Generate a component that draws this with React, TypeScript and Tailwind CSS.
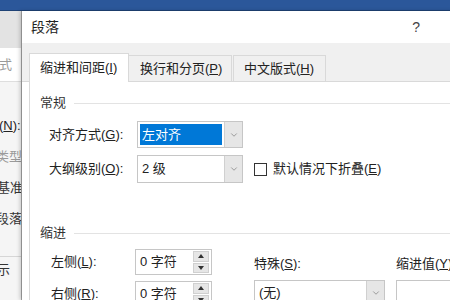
import { ChevronDown } from "lucide-react";

// 段落对话框 - 缩进和间距
const font = { fontFamily: '"Liberation Sans", "Noto Sans CJK SC", sans-serif' };

function Select({ value, selected, className }: { value: string; selected?: boolean; className: string }) {
  return (
    <div className={`flex border border-[#c6c6c6] bg-white ${className}`}>
      <div className="flex-1 flex items-center p-[2px] min-w-0">
        {selected ? (
          <span className="flex-1 h-full flex items-center bg-[#0078d7] text-white pl-[2px] text-[13px]">{value}</span>
        ) : (
          <span className="pl-[2px] text-[13px] text-[#222]">{value}</span>
        )}
      </div>
      <div className="w-[18px] flex items-center justify-center bg-[#e6e6e6] border-l border-[#d0d0d0]">
        <ChevronDown size={10} strokeWidth={1.5} className="text-[#6d6d6d]" />
      </div>
    </div>
  );
}

function Spin({ value }: { value: string }) {
  return (
    <div className="flex w-[77px] h-[26px] border border-[#c6c6c6] bg-white">
      <span className="flex-1 flex items-center pl-[4px] text-[13px] text-[#222]">{value}</span>
      <div className="w-[19px] flex flex-col gap-[1px] p-[1px] pr-[2px]">
        <div className="flex-1 bg-[#e6e6e6] border border-[#d0d0d0] flex items-center justify-center">
          <span className="w-0 h-0 border-l-[3px] border-r-[3px] border-b-[4px] border-l-transparent border-r-transparent border-b-[#333]" />
        </div>
        <div className="flex-1 bg-[#e6e6e6] border border-[#d0d0d0] flex items-center justify-center">
          <span className="w-0 h-0 border-l-[3px] border-r-[3px] border-t-[4px] border-l-transparent border-r-transparent border-t-[#333]" />
        </div>
      </div>
    </div>
  );
}

function GroupHeader({ title, className }: { title: string; className: string }) {
  return (
    <div className={`flex items-center h-[18px] ${className}`}>
      <span className="text-[13px] text-[#333]">{title}</span>
      <div className="flex-1 h-px bg-[#e3e3e3] ml-[8px]" />
    </div>
  );
}

export default function App() {
  return (
    <div className="w-[450px] h-[300px] overflow-hidden flex flex-col bg-[#f3f3f3]" style={font}>
      {/* Word 标题栏 */}
      <div className="h-[11px] bg-[#2b579a] border-b border-[#1e4275] shrink-0" />

      <div className="flex flex-1 min-h-0">
        {/* 左侧样式窗格 */}
        <div className="w-[22px] shrink-0 overflow-hidden flex flex-col text-[13px] whitespace-nowrap bg-[#f5f5f5] border-r border-[#a9a9a9]">
          <div className="h-[37px] bg-[#e3e3e3]" />
          <div className="h-[34px] bg-white border-b border-[#dedede] flex items-center text-[#9a9a9a] -ml-[1px]">式</div>
          <div className="h-[28px]" />
          <div className="h-[31px] flex items-center text-[#222] -ml-[1px]">
            (<span className="underline">N</span>):
          </div>
          <div className="h-[31px] flex items-center text-[#9a9a9a] -ml-[4px]">类型</div>
          <div className="h-[31px] flex items-center text-[#333] -ml-[3px]">基准</div>
          <div className="h-[32px] flex items-center text-[#333] -ml-[4px]">段落</div>
          <div className="h-[22px] border-b border-[#d6d6d6]" />
          <div className="h-[26px] flex items-center text-[#333] -ml-[3px]">示</div>
        </div>

        {/* 对话框 */}
        <div className="flex-1 flex flex-col bg-white shadow-[-2px_0_4px_rgba(0,0,0,0.2)]">
          <div className="h-[32px] shrink-0 flex items-center justify-between pl-[9px] pr-[36px]">
            <span className="text-[14px] text-[#222]">段落</span>
            <span className="text-[14px] text-[#444]">?</span>
          </div>

          {/* 选项卡 */}
          <div className="h-[39px] shrink-0 bg-[#f0f0f0] flex items-end pl-[7px] border-b border-[#d9d9d9]">
            <div className="h-[29px] w-[100px] bg-white border border-b-0 border-[#d9d9d9] -mb-px flex items-center pl-[10px] text-[13px] text-[#222]">
              缩进和间距(<span className="underline">I</span>)
            </div>
            <div className="h-[26px] w-[103px] bg-[#f0f0f0] border border-l-0 border-b-0 border-[#d9d9d9] flex items-center pl-[11px] text-[13px] text-[#222]">
              换行和分页(<span className="underline">P</span>)
            </div>
            <div className="h-[26px] w-[93px] ml-[1px] bg-[#f0f0f0] border border-b-0 border-[#d9d9d9] flex items-center pl-[10px] text-[13px] text-[#222]">
              中文版式(<span className="underline">H</span>)
            </div>
          </div>

          {/* 内容 */}
          <div className="flex-1 ml-[7px] border-l border-[#d9d9d9] pl-[10px] flex flex-col text-[13px] text-[#222]">
            <GroupHeader title="常规" className="mt-[12px]" />

            <div className="flex items-center mt-[9px] pl-[9px]">
              <span className="w-[88px]">
                对齐方式(<span className="underline">G</span>):
              </span>
              <Select value="左对齐" selected className="w-[106px] h-[27px]" />
            </div>
            <div className="flex items-center mt-[7px] pl-[9px]">
              <span className="w-[88px]">
                大纲级别(<span className="underline">O</span>):
              </span>
              <Select value="2 级" className="w-[106px] h-[28px]" />
              <div className="w-[13px] h-[13px] border border-[#333] bg-white ml-[11px]" />
              <span className="ml-[6px] whitespace-nowrap">
                默认情况下折叠(<span className="underline">E</span>)
              </span>
            </div>

            <GroupHeader title="缩进" className="mt-[41px]" />

            <div className="flex pl-[11px]">
              <div className="flex flex-col">
                <div className="flex items-center mt-[7px]">
                  <span className="w-[84px]">
                    左侧(<span className="underline">L</span>):
                  </span>
                  <Spin value="0 字符" />
                </div>
                <div className="flex items-center mt-[6px]">
                  <span className="w-[84px]">
                    右侧(<span className="underline">R</span>):
                  </span>
                  <Spin value="0 字符" />
                </div>
              </div>
              <div className="flex flex-col ml-[42px] mt-[13px]">
                <span className="h-[18px] flex items-center">
                  特殊(<span className="underline">S</span>):
                </span>
                <Select value="(无)" className="w-[131px] h-[26px] mt-[7px]" />
              </div>
              <div className="flex flex-col ml-[11px] mt-[13px] flex-1">
                <span className="h-[18px] flex items-center whitespace-nowrap">
                  缩进值(<span className="underline">Y</span>):
                </span>
                <div className="h-[26px] mt-[7px] border border-[#c6c6c6] bg-white" />
              </div>
            </div>
          </div>
        </div>
      </div>
    </div>
  );
}
